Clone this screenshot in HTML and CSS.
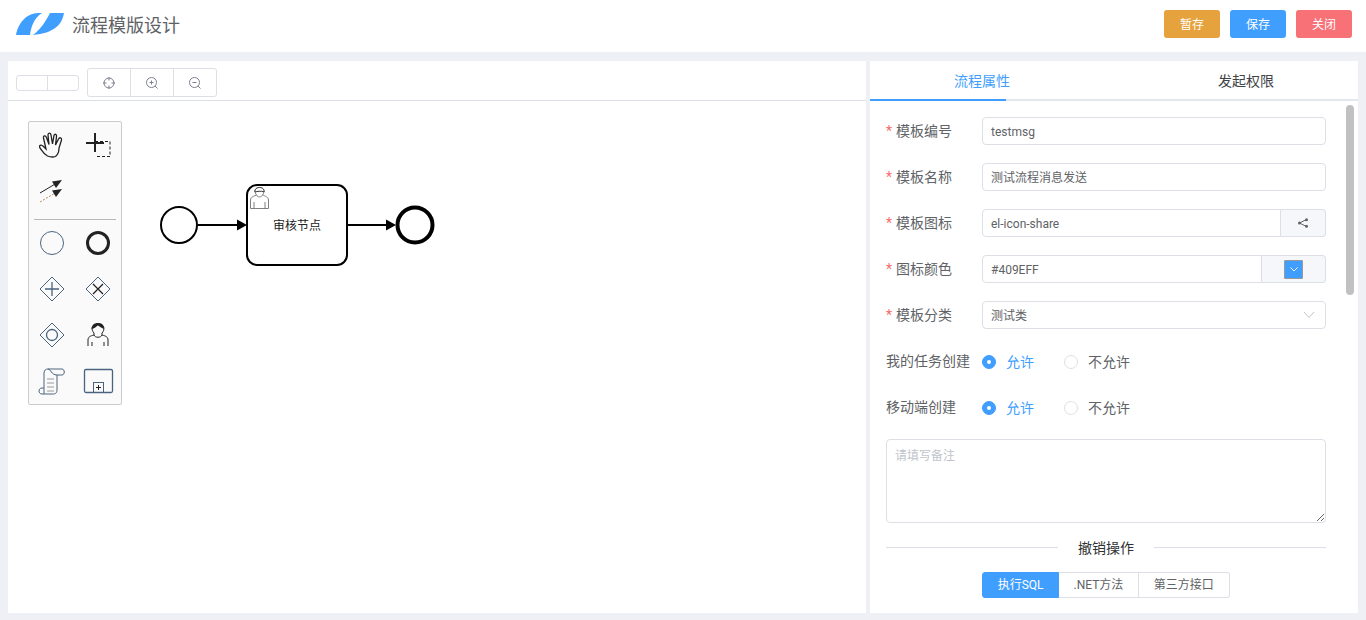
FILE: index.html
```html
<!DOCTYPE html>
<html lang="zh-CN">
<head>
<meta charset="utf-8">
<title>流程模版设计</title>
<link rel="stylesheet" href="styles.css">
</head>
<body>
<header class="topbar">
  <div class="brand">
    <svg class="logo" viewBox="0 0 48 22" width="48" height="22"><path fill="#409eff" d="M0 22C2 12 8 1 22 0L26 0C18 5 15 14 14 22Z"/><path fill="#409eff" d="M34 0L48 0C46 12 38 20 17 22C24 17 30 8 34 0Z"/></svg>
    <h1 class="title">流程模版设计</h1>
  </div>
  <div class="actions">
    <button class="btn btn-warn">暂存</button>
    <button class="btn btn-primary">保存</button>
    <button class="btn btn-danger">关闭</button>
  </div>
</header>
<main class="workspace">
  <section class="designer">
    <div class="toolbar">
      <div class="tool-group small"><span class="tool tool-a"></span><span class="tool tool-b"></span></div>
      <div class="tool-group">
        <span class="tool tool-l"><svg viewBox="0 0 14 14" width="14" height="14" class="ti"><circle cx="7" cy="7" r="5"/><path d="M7 1V4.500M7 9.500V13M1 7H4.500M9.500 7H13"/></svg></span>
        <span class="tool tool-l"><svg viewBox="0 0 14 14" width="14" height="14" class="ti"><circle cx="6.500" cy="6.500" r="5"/><path d="M10 10L12.500 12.500M6.500 4.500V8.500M4.500 6.500H8.500"/></svg></span>
        <span class="tool tool-l"><svg viewBox="0 0 14 14" width="14" height="14" class="ti"><circle cx="6.500" cy="6.500" r="5"/><path d="M10 10L12.500 12.500M4.500 6.500H8.500"/></svg></span>
      </div>
    </div>
    <div class="canvas">
      <svg class="diagram" width="858" height="512" viewBox="0 101 858 512">
        <circle cx="171" cy="225" r="18" class="shape" stroke-width="2"/>
        <path d="M190 225H230" class="shape" stroke-width="2"/>
        <path d="M229 219.500L239 225L229 230.500Z" fill="#000"/>
        <rect x="239" y="185" width="100" height="80" rx="10" class="shape" stroke-width="2"/>
        <g class="user-mark">
          <path d="M242.500 208.500V200C242.500 197 246 196 248.500 195C246 192 246.500 187.500 251.500 187.500C256.500 187.500 257 192 254.500 195C257 196 260.500 197 260.500 200V208.500Z"/>
          <path d="M246 208V202M257 208V202M248.500 195C249.500 197.500 253.500 197.500 254.500 195"/>
          <path class="hair" d="M247 192C249 191.500 253 190.500 256 192C256.500 188.500 253.500 187.500 251.500 187.500C249 187.500 246.500 189 247 192Z"/>
        </g>
        <text x="289" y="230" class="node-label">审核节点</text>
        <path d="M340 225H378" class="shape" stroke-width="2"/>
        <path d="M378 219.500L388 225L378 230.500Z" fill="#000"/>
        <circle cx="407" cy="225" r="17.500" class="shape" stroke-width="4"/>
      </svg>
      <div class="palette">
        <span class="cell"><svg viewBox="0 0 46 46" class="pi"><path stroke-width="1.300" d="M18.500 34C14.500 32 12.500 28 11 26C9.500 23.500 12 22 14.500 24.500L17 27L14.500 16C14 13.500 16.500 13 17.500 15.500L20 22.500L19 13C19 10.500 21.500 10.500 22 13L23.500 22L25 13.500C25.500 11.500 28 12 27.500 14.500L26.500 23L29.500 17C30.500 15 33 15.500 32.500 18L30 26C30 30 28.500 33 26.500 34.500C23.500 35.500 21 35 18.500 34Z"/></svg></span>
        <span class="cell"><svg viewBox="0 0 46 46" class="pi"><path d="M11 21H29M20 11V30" stroke-width="2"/><path d="M20 19.500H35V34.500H20" stroke-dasharray="3 2"/></svg></span>
        <span class="cell"><svg viewBox="0 0 46 46" class="pi"><path d="M11 25L27 15.500"/><path d="M33 12L23 13.500L27 20Z" class="solid"/><path d="M11 34L27 24.500" class="warm" stroke-dasharray="2 1.500"/><path d="M33 21L23 22.500L27 29Z" class="solid"/></svg></span>
        <span class="cell"></span>
        <hr class="sep">
        <span class="cell"><svg viewBox="0 0 46 46" class="pi"><circle cx="23" cy="23" r="11.500" class="tinted"/></svg></span>
        <span class="cell"><svg viewBox="0 0 46 46" class="pi"><circle cx="23" cy="23" r="10.500" stroke-width="3"/></svg></span>
        <span class="cell"><svg viewBox="0 0 46 46" class="pi"><path d="M23 11L35 23L23 35L11 23Z" class="tinted"/><path d="M23 16V30M16 23H30" stroke-width="1.300" class="tinted"/></svg></span>
        <span class="cell"><svg viewBox="0 0 46 46" class="pi"><path d="M23 11L35 23L23 35L11 23Z" class="tinted"/><path d="M18 18L28 28M28 18L18 28" stroke-width="1.300"/></svg></span>
        <span class="cell"><svg viewBox="0 0 46 46" class="pi"><path d="M23 11L35 23L23 35L11 23Z" class="tinted"/><circle cx="23" cy="23" r="5.500" stroke-width="1.300" class="tinted"/></svg></span>
        <span class="cell"><svg viewBox="0 0 46 46" class="pi"><path d="M13 34V28C13 25 15 24 19 23V21C16 18 16 12 23 12C30 12 30 18 27 21V23C31 24 33 25 33 28V34"/><path d="M16.500 17C19 17 22 14 23 13.500C25 15 27 16 29 17C29 13 27 11 23 11C19 11 17 13 16.500 17Z" class="solid"/><path d="M19 23C20 26 26 26 27 23M17 34V30M29 34V30"/></svg></span>
        <span class="cell"><svg viewBox="0 0 46 46" class="pi"><path d="M15 30V15C15 12 17 11 19 11H33C36 11 36 17 33 17H28M19 11C22 11 22 17 28 17V32C28 36 25 36 24 36H13C9 36 9 30 13 30H15V36" class="tinted"/><path d="M18 21H25M18 25H25M18 29H25M18 33H25" class="faint"/></svg></span>
        <span class="cell"><svg viewBox="0 0 46 46" class="pi"><rect x="9.500" y="11.500" width="28" height="23" rx="1.500" stroke-width="1.300" class="tinted"/><rect x="18.500" y="24.500" width="10" height="10" class="tinted"/><path d="M23.500 27V32M21 29.500H26"/></svg></span>
      </div>
    </div>
  </section>
  <aside class="props">
    <nav class="tabs">
      <span class="tab active">流程属性</span>
      <span class="tab">发起权限</span>
      <span class="tab-bar"></span>
    </nav>
    <span class="scroll-thumb"></span>
    <form class="form">
      <div class="row"><label class="lbl req">模板编号</label><input class="inp latin" value="testmsg"></div>
      <div class="row"><label class="lbl req">模板名称</label><input class="inp han" value="测试流程消息发送"></div>
      <div class="row"><label class="lbl req">模板图标</label>
        <div class="group"><input class="inp joined latin" value="el-icon-share"><span class="append share"><svg viewBox="0 0 12 12" width="12" height="12"><path d="M9.500 2.500L2.500 6L9.500 9.500" fill="none" stroke="#606266"/><circle cx="9.500" cy="2.800" r="1.500" fill="#606266"/><circle cx="2.500" cy="6" r="1.500" fill="#606266"/><circle cx="9.500" cy="9.200" r="1.500" fill="#606266"/></svg></span></div>
      </div>
      <div class="row"><label class="lbl req">图标颜色</label>
        <div class="group"><input class="inp joined latin" value="#409EFF"><span class="append color"><span class="swatch"><svg viewBox="0 0 12 12" width="12" height="12"><path d="M2.500 4.500L6 8L9.500 4.500" fill="none" stroke="#fff"/></svg></span></span></div>
      </div>
      <div class="row"><label class="lbl req">模板分类</label>
        <div class="select"><input class="inp han" value="测试类"><svg class="chev" viewBox="0 0 12 8" width="12" height="8"><path d="M1 1L6 6.500L11 1" fill="none" stroke="#c0c4cc"/></svg></div>
      </div>
      <div class="row"><label class="lbl">我的任务创建</label>
        <div class="radios"><span class="radio on"><i class="dot"></i>允许</span><span class="radio"><i class="dot"></i>不允许</span></div>
      </div>
      <div class="row"><label class="lbl">移动端创建</label>
        <div class="radios"><span class="radio on"><i class="dot"></i>允许</span><span class="radio"><i class="dot"></i>不允许</span></div>
      </div>
      <textarea class="note" placeholder="请填写备注"></textarea>
      <div class="divider"><span class="divider-text">撤销操作</span></div>
      <div class="seg">
        <span class="seg-btn on">执行SQL</span><span class="seg-btn">.NET方法</span><span class="seg-btn">第三方接口</span>
      </div>
    </form>
  </aside>
</main>
</body>
</html>
```
FILE: styles.css
```css
* { box-sizing: border-box; }
html, body { height: 100%; }
body {
  margin: 0;
  height: 620px;
  overflow: hidden;
  background: #eff0f5;
  color: #606266;
  font-family: Roboto, "Noto Sans CJK SC", sans-serif;
  font-size: 14px;
  display: flex;
  flex-direction: column;
}
.topbar {
  height: 52px;
  background: #fff;
  display: flex;
  align-items: center;
  justify-content: space-between;
  padding: 0 14px 4px 16px;
  flex: none;
}
.brand { display: flex; align-items: center; gap: 8px; }
.logo { display: block; }
.title { margin: 4px 0 0; font-size: 18px; font-weight: 400; color: #606266; line-height: 24px; }
.actions { display: flex; gap: 10px; }
.btn {
  width: 56px;
  height: 28px;
  border: 0;
  border-radius: 3px;
  color: #fff;
  font: 12px Roboto, "Noto Sans CJK SC", sans-serif;
  padding: 0 0 2px;
}
.btn-warn { background: #e6a23c; }
.btn-primary { background: #409eff; }
.btn-danger { background: #f87176; }

.workspace {
  flex: none;
  height: 561px;
  padding-top: 9px;
  display: flex;
  padding-left: 8px;
  gap: 4px;
}
.designer { width: 858px; height: 552px; background: #fff; display: flex; flex-direction: column; }
.toolbar {
  height: 40px;
  flex: none;
  border-bottom: 1px solid #dcdfe6;
  padding: 7px 8px 3px;
  display: flex;
  align-items: flex-start;
  gap: 8px;
}
.tool-group {
  display: flex;
  height: 29px;
  border: 1px solid #dcdfe6;
  border-radius: 3px;
}
.tool-group.small { height: 16px; margin-top: 7px; }
.tool { display: flex; align-items: center; justify-content: center; border-left: 1px solid #dcdfe6; }
.tool:first-child { border-left: 0; }
.tool-a { width: 30px; }
.tool-b { width: 31px; }
.tool-l { width: 43px; }
.tool-l:first-child { width: 42px; }
.ti { fill: none; stroke: #7d7f8f; stroke-width: 1; }

.canvas { position: relative; flex: 1; }
.diagram { display: block; }
.shape { fill: #fff; stroke: #000; }
.user-mark path { fill: #fff; stroke: #808080; stroke-width: 1; }
.user-mark path:nth-child(2) { fill: none; }
.user-mark .hair { fill: #fff; stroke: #333; }
.node-label {
  font-family: "Noto Sans CJK SC", sans-serif;
  font-size: 12px;
  text-anchor: middle;
  fill: #222;
}
.palette {
  position: absolute;
  left: 20px;
  top: 20px;
  width: 94px;
  height: 284px;
  background: #fafafa;
  border: 1px solid #ccc;
  border-radius: 2px;
  display: grid;
  grid-template-columns: 46px 46px;
  grid-template-rows: 46px 46px 6px;
  grid-auto-rows: 46px;
  align-content: start;
}
.cell { display: block; height: 46px; }
.pi { display: block; width: 46px; height: 46px; fill: none; stroke: #222; stroke-width: 1; }
.pi .solid { fill: #222; stroke: none; }
.pi .tinted { stroke: #4a6480; }
.pi .warm { stroke: #b98a5a; }
.pi .faint { stroke: #999; }
.sep {
  grid-column: 1 / 3;
  height: 1px;
  margin: 5px 5px 0;
  border: 0;
  background: #b8b8b8;
  align-self: start;
}

.props {
  position: relative;
  width: 488px;
  height: 552px;
  background: #fff;
  overflow: hidden;
}
.tabs {
  position: relative;
  height: 40px;
  border-bottom: 2px solid #e4e7ed;
  display: flex;
  gap: 208px;
  padding-left: 84px;
  line-height: 40px;
  color: #404346;
}
.tab.active { color: #409eff; }
.tab-bar {
  position: absolute;
  left: 0;
  bottom: -2px;
  width: 136px;
  height: 2px;
  background: #409eff;
}
.scroll-thumb {
  position: absolute;
  left: 476px;
  top: 44px;
  width: 8px;
  height: 190px;
  border-radius: 4px;
  background: #c1c1c1;
}
.form { width: 440px; margin-left: 16px; padding-top: 16px; display: flex; flex-direction: column; }
.row { display: flex; align-items: center; height: 28px; margin-bottom: 18px; }
.lbl { width: 96px; flex: none; color: #606266; padding-bottom: 2px; }
.req::before { content: "*"; color: #f56c6c; margin-right: 4px; }
.inp {
  width: 100%;
  height: 28px;
  border: 1px solid #dcdfe6;
  border-radius: 4px;
  padding: 0 8px;
  color: #606266;
  font: 12px Roboto, "Noto Sans CJK SC", sans-serif;
  background: #fff;
  outline: 0;
  display: block;
}
.inp.latin { padding-top: 2px; }
.inp.han { padding-bottom: 2px; }
.group { display: flex; flex: 1; }
.joined { flex: 1; min-width: 0; border-radius: 4px 0 0 4px; }
.append {
  flex: none;
  height: 28px;
  display: flex;
  align-items: center;
  justify-content: center;
  background: #f5f7fa;
  border: 1px solid #dcdfe6;
  border-left: 0;
  border-radius: 0 4px 4px 0;
}
.share { width: 45px; }
.color { width: 64px; }
.swatch {
  width: 19px;
  height: 19px;
  background: #409eff;
  border: 1px solid #999;
  border-radius: 1px;
  display: flex;
  align-items: center;
  justify-content: center;
}
.select { position: relative; flex: 1; }
.chev { position: absolute; right: 11px; top: 10px; }
.radios { display: flex; gap: 30px; }
.radio { display: flex; align-items: center; gap: 10px; color: #606266; }
.radio.on { color: #409eff; }
.dot { width: 14px; height: 14px; margin-top: 1px; border-radius: 50%; border: 1px solid #dcdfe6; background: #fff; display: block; }
.radio.on .dot { background: #409eff; border-color: #409eff; position: relative; }
.radio.on .dot::after {
  content: "";
  position: absolute;
  left: 4px;
  top: 4px;
  width: 4px;
  height: 4px;
  border-radius: 50%;
  background: #fff;
}
.note {
  display: block;
  width: 440px;
  height: 84px;
  border: 1px solid #dcdfe6;
  border-radius: 4px;
  padding: 7px 8px;
  font: 12px/1.5 Roboto, "Noto Sans CJK SC", sans-serif;
  color: #606266;
  outline: 0;
}
.note::placeholder { color: #c0c4cc; }
.divider {
  width: 440px;
  height: 20px;
  margin-top: 14px;
  margin-bottom: 15px;
  display: flex;
  align-items: center;
  color: #303133;
}
.divider::before, .divider::after { content: ""; flex: 1; height: 1px; background: #dcdfe6; }
.divider-text { padding: 0 20px; }
.seg { width: 440px; display: flex; justify-content: center; }
.seg-btn {
  height: 26px;
  line-height: 24px;
  padding: 0 14.500px;
  border: 1px solid #dcdfe6;
  border-left: 0;
  font-size: 12px;
  color: #606266;
  background: #fff;
}
.seg-btn:first-child { border-left: 1px solid #dcdfe6; border-radius: 3px 0 0 3px; }
.seg-btn:last-child { padding: 0 15px; border-radius: 0 3px 3px 0; }
.seg-btn.on { background: #409eff; border-color: #409eff; color: #fff; }
```
